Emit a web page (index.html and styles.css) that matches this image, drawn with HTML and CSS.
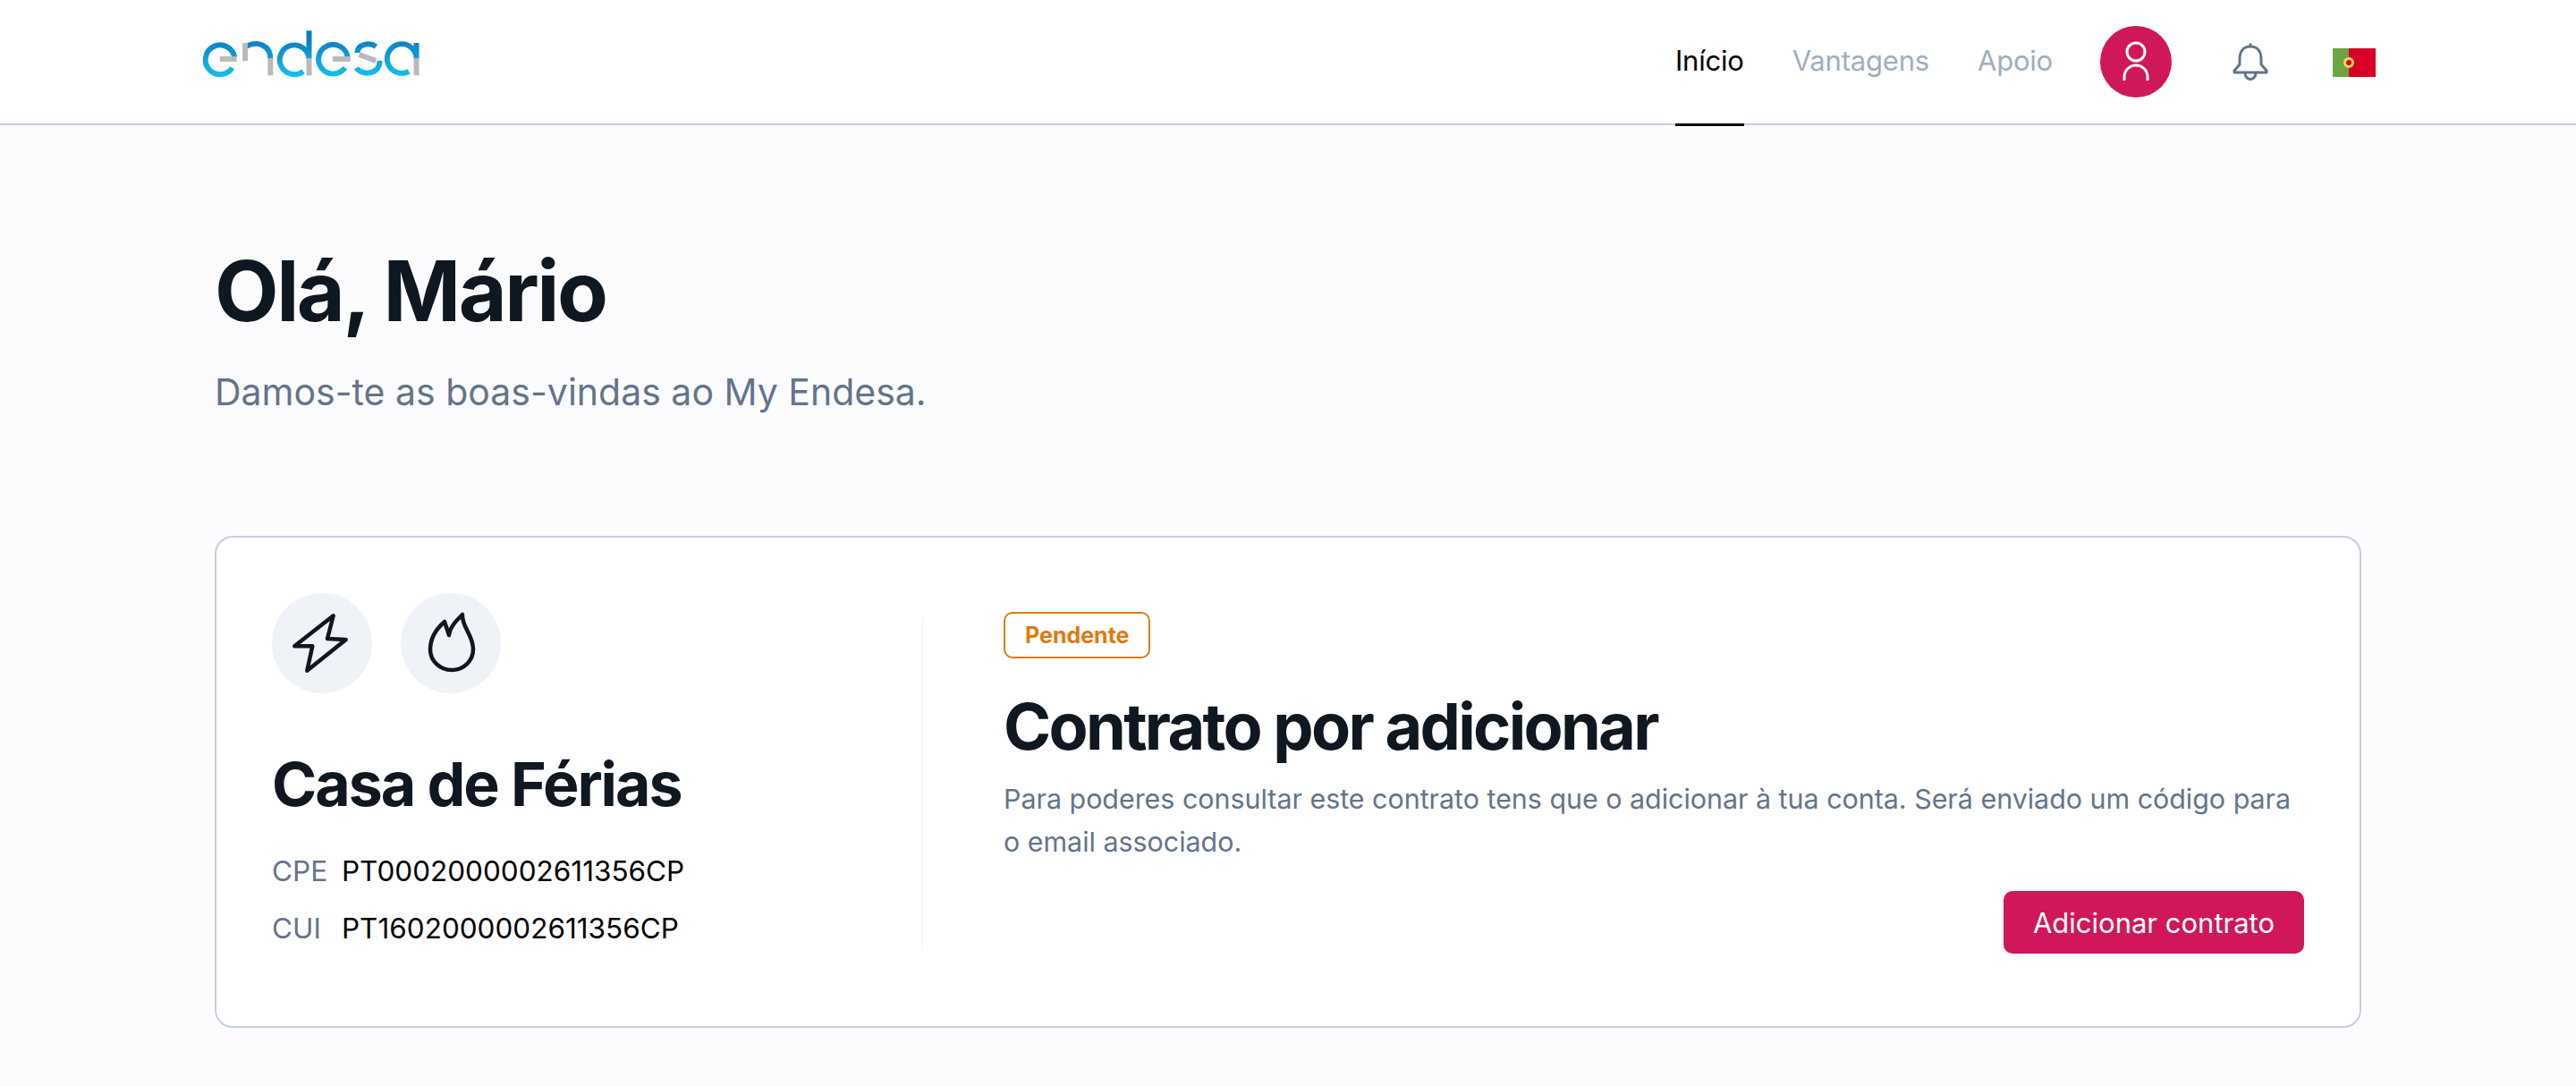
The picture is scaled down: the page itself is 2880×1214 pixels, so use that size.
FILE: index.html
```html
<!DOCTYPE html>
<html lang="pt">
<head>
  <meta charset="utf-8"/>
  <title>My Endesa</title>
  <link rel="stylesheet" href="styles.css">
</head>
<body>
  <header class="topbar">
    <svg class="logo" viewBox="26 32 246 56" aria-label="endesa">
      <defs>
        <linearGradient id="logoBlue" gradientUnits="userSpaceOnUse" x1="0" y1="40" x2="0" y2="86">
          <stop offset="0" stop-color="#0a78c2"/>
          <stop offset="1" stop-color="#16c0ea"/>
        </linearGradient>
      </defs>
      <g class="logo-blue">
        <path d="M62.5 64A16.5 16.5 0 1 0 60 76"/>
        <path d="M75 52C88 45 103 50 103 66"/>
        <path d="M146.500 66A16.500 16.500 0 1 0 140 80M146.500 66V34"/>
        <path d="M190 64A16.500 16.500 0 1 0 187 76"/>
        <path d="M222 52C215 47 201 49 201 59M226 68C227 84 205 85 200 76"/>
        <path d="M267.500 66A16.500 16.500 0 1 0 259 80M267.500 66V48"/>
      </g>
      <g class="logo-grey">
        <path d="M46 66H65"/>
        <path d="M74.500 48V68"/>
        <path d="M103 65V84.500"/>
        <path d="M146.500 65V84.500"/>
        <path d="M173 66H193"/>
        <path d="M203 61L222 68"/>
        <path d="M267.500 65V84.500"/>
      </g>
    </svg>
    <nav class="nav">
      <a class="nav-link is-active">Início</a>
      <a class="nav-link">Vantagens</a>
      <a class="nav-link">Apoio</a>
    </nav>
    <div class="avatar">
      <svg viewBox="0 0 80 80" width="80" height="80">
        <circle cx="40" cy="29" r="10"/>
        <path d="M27 61v-4a13 13 0 0 1 26 0v4"/>
      </svg>
    </div>
    <svg class="bell" viewBox="0 0 40 44" width="40" height="44">
      <path d="M20 1.500V5M20 5C11 5 8 12 8 19V25L2 32V34H38V32L32 25V19C32 12 29 5 20 5ZM14 34.500a6 7 0 0 0 12 0"/>
    </svg>
    <div class="flag"><span class="flag-mark"></span></div>
  </header>

  <main class="page">
    <h1 class="hello">Olá, Mário</h1>
    <p class="welcome">Damos-te as boas-vindas ao My Endesa.</p>

    <section class="card">
      <div class="card-left">
        <div class="supply-icons">
          <span class="supply-icon">
            <svg viewBox="0 0 112 112" width="112" height="112">
              <path d="M68.700 25.300L62 51L82.700 52L39.300 86.700L45.300 59.300L25.300 59.300Z"/>
            </svg>
          </span>
          <span class="supply-icon">
            <svg viewBox="0 0 112 112" width="112" height="112">
              <path d="M54 47C55 38 62 31 69 24C68 38 81 46 81 63C81 76 70 86 57 86C44 86 33 76 33 63C33 50 41 39 49 32Z"/>
            </svg>
          </span>
        </div>
        <h2 class="house">Casa de Férias</h2>
        <dl class="codes">
          <div class="code-row"><dt>CPE</dt><dd>PT0002000002611356CP</dd></div>
          <div class="code-row"><dt>CUI</dt><dd>PT1602000002611356CP</dd></div>
        </dl>
      </div>
      <div class="card-divider"></div>
      <div class="card-right">
        <span class="badge">Pendente</span>
        <h2 class="contract">Contrato por adicionar</h2>
        <p class="contract-text">Para poderes consultar este contrato tens que o adicionar à tua conta. Será enviado um código para o email associado.</p>
        <div class="actions">
          <button class="add-btn">Adicionar contrato</button>
        </div>
      </div>
    </section>
  </main>
</body>
</html>
```

FILE: styles.css
```css
* {
  box-sizing: border-box;
}
body {
  margin: 0;
  min-height: 1214px;
  background-color: #fcfcff;
  color: #0f1720;
  font-family: Inter, "Liberation Sans", sans-serif;
}
.topbar {
  display: flex;
  align-items: center;
  height: 140px;
  padding: 0 224px 0 226px;
  background-color: #fff;
  border-bottom: 2px solid #c5d0e0;
}
.logo {
  width: 244px;
  height: 56px;
  margin-right: auto;
  margin-bottom: 18px;
}
.logo path {
  fill: none;
  stroke-width: 6;
}
.logo-blue path {
  stroke: url(#logoBlue);
}
.logo-grey path {
  stroke: #b9b9b9;
}
.nav {
  display: flex;
  align-items: center;
  gap: 54px;
  height: 138px;
}
.nav-link {
  display: flex;
  align-items: center;
  height: 141px;
  margin-top: 3px;
  padding-bottom: 3px;
  color: #a0aec0;
  font-size: 31px;
  letter-spacing: -0.2px;
  border-bottom: 3px solid transparent;
}
.nav-link.is-active {
  color: #000;
  border-bottom-color: #000;
}
.avatar {
  width: 80px;
  height: 80px;
  margin-left: 53px;
  border-radius: 50%;
  background-color: #d0175b;
}
.avatar svg {
  display: block;
  fill: none;
  stroke: #fff;
  stroke-width: 3;
}
.bell {
  margin-left: 68px;
  fill: none;
  stroke: #64748b;
  stroke-width: 3;
  stroke-linejoin: round;
}
.flag {
  position: relative;
  width: 48px;
  height: 32px;
  margin-left: 72px;
  margin-top: 2px;
  background: linear-gradient(to right, #6da544 0, #6da544 18px, #d80027 18px);
}
.flag-mark {
  position: absolute;
  left: 12px;
  top: 10px;
  width: 12px;
  height: 12px;
  border: 3px solid #ffda44;
  border-radius: 50%;
  background-color: #d80027;
}
.page {
  padding: 0 240px;
}
.hello {
  margin: 0;
  padding-top: 132px;
  font-size: 93px;
  line-height: 106px;
  font-weight: 700;
  letter-spacing: -2.500px;
}
.welcome {
  margin: 36px 0 0;
  color: #64748b;
  font-size: 41px;
  line-height: 48px;
}
.card {
  display: flex;
  height: 550px;
  margin-top: 137px;
  padding: 62px;
  background-color: #fff;
  border: 2px solid #c5d0e0;
  border-radius: 20px;
}
.card-left {
  width: 727px;
  flex-shrink: 0;
}
.card-divider {
  width: 1px;
  height: 372px;
  margin-top: 26px;
  background-color: #eef1f6;
}
.supply-icons {
  display: flex;
  gap: 32px;
}
.supply-icon {
  display: block;
  width: 112px;
  height: 112px;
  border-radius: 50%;
  background-color: #eff2f7;
}
.supply-icon svg {
  display: block;
  fill: none;
  stroke: #0f1720;
  stroke-width: 4.500;
  stroke-linejoin: round;
}
.house {
  margin: 60px 0 0;
  font-size: 68px;
  line-height: 82px;
  font-weight: 700;
  letter-spacing: -2px;
}
.codes {
  margin: 24px 0 0;
}
.code-row {
  display: flex;
  height: 64px;
  align-items: center;
  font-size: 31.500px;
}
.code-row dt {
  width: 78px;
  color: #64748b;
}
.code-row dd {
  margin: 0;
  color: #000;
}
.card-right {
  flex: 1;
  padding-left: 90px;
  padding-top: 21px;
}
.badge {
  display: inline-block;
  height: 52px;
  padding: 0 22px;
  color: #e07a10;
  font-size: 25px;
  font-weight: 700;
  line-height: 48px;
  border: 2px solid #e07a10;
  border-radius: 10px;
}
.contract {
  margin: 33px 0 0;
  font-size: 72px;
  line-height: 86px;
  font-weight: 700;
  letter-spacing: -2.700px;
}
.contract-text {
  margin: 14px 0 0;
  color: #64748b;
  font-size: 30.400px;
  line-height: 48px;
}
.actions {
  display: flex;
  justify-content: flex-end;
  margin-top: 31px;
}
.add-btn {
  width: 336px;
  height: 70px;
  padding: 0;
  color: #fff;
  font-family: inherit;
  font-size: 31px;
  background-color: #d0175b;
  border: none;
  border-radius: 10px;
}
```
